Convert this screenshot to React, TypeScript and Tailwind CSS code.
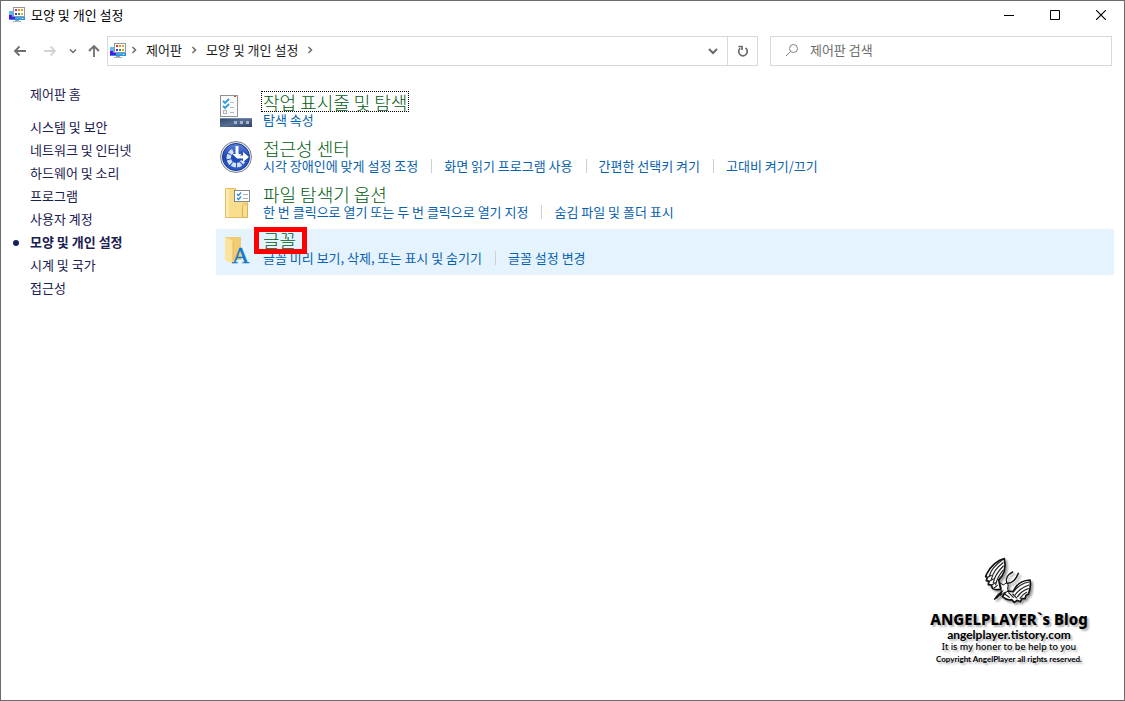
import React from 'react';

interface Category {
  title: string;
  icon: React.ReactNode;
  links: string[];
  focused?: boolean;
  highlighted?: boolean;
}

const PersonalizeIcon = () => (
  <svg width="16" height="16" viewBox="0 0 16 16" className="shrink-0">
    <rect x="0" y="4" width="16" height="9" fill="#2f8fd8" />
    <path d="M0 4h5v5H0z" fill="#5cb8ea" />
    <path d="M0 8h3v2h3v2H0z" fill="#5a10e8" />
    <path d="M6 10h9v2H6z" fill="#35a8f0" />
    <rect x="13" y="11" width="1" height="1" fill="#fff" />
    <path d="M6 13h4v1H6z" fill="#8aa0b0" />
    <path d="M4 14h8v1H4z" fill="#a9b7c2" />
    <rect x="4.5" y="0.5" width="11" height="9" fill="#fff" stroke="#8c99a5" />
    <rect x="6" y="2" width="2" height="2" fill="#e0342c" />
    <rect x="9" y="2" width="2" height="2" fill="#f08a24" />
    <rect x="12" y="2" width="2" height="2" fill="#e8a020" />
    <rect x="6" y="6" width="2" height="2" fill="#5a2bd0" />
    <rect x="9" y="6" width="2" height="2" fill="#2c9a48" />
    <rect x="12" y="6" width="2" height="2" fill="#d8b020" />
  </svg>
);

const TaskbarIcon = () => (
  <svg width="32" height="32" viewBox="0 0 32 32">
    <defs>
      <linearGradient id="bar" x1="0" y1="0" x2="1" y2="1">
        <stop offset="0" stopColor="#2f4468" />
        <stop offset="0.5" stopColor="#566d94" />
        <stop offset="1" stopColor="#2c4064" />
      </linearGradient>
    </defs>
    <rect x="0.5" y="0.5" width="17" height="21" fill="#fbfbfb" stroke="#8d9399" />
    <path d="M14 1h2v1h-2z" fill="#d04030" />
    <path d="M3 6l2 2 4-4M3 11l2 2 4-4" fill="none" stroke="#2d9be0" strokeWidth="1.8" />
    <rect x="3.5" y="15.5" width="3" height="3" fill="none" stroke="#b0b5ba" />
    <path d="M10 7.5h4M10 12.5h4M10 17.5h4" stroke="#b4b8bc" />
    <rect x="0" y="23" width="32" height="9" fill="url(#bar)" />
    <path d="M0 23.5h32" stroke="#7186a8" />
    <path d="M14 26h3v3h-3zM20 26h3v3h-3zM26 26h3v3h-3z" fill="#a5b3c8" />
  </svg>
);

const AccessIcon = () => (
  <svg width="32" height="32" viewBox="0 0 32 32">
    <defs>
      <linearGradient id="disc" x1="0" y1="0" x2="0" y2="1">
        <stop offset="0" stopColor="#5f83d8" />
        <stop offset="0.5" stopColor="#1d48b2" />
        <stop offset="1" stopColor="#2a5fd2" />
      </linearGradient>
    </defs>
    <circle cx="16" cy="16" r="15.5" fill="#e4e7eb" stroke="#7d8590" />
    <circle cx="16" cy="16" r="13.5" fill="url(#disc)" stroke="#17348c" />
    <path
      d="M13 10A7.500 7.500 0 1 0 23 20"
      fill="none"
      stroke="#d5e0f5"
      strokeWidth="4.500"
      strokeDasharray="4.200 1"
    />
    <path d="M15.500 5h3v8h3l-4.500 4.500-4.500-4.500h3z" fill="#fff" />
    <path d="M17 14.500h6v-3.500l6 5-6 5v-3.500h-6z" fill="#fff" />
  </svg>
);

const FolderOptionsIcon = () => (
  <svg width="32" height="32" viewBox="0 0 32 32">
    <path d="M5.500 1.500h10v2h12v27h-22z" fill="#f8dd8c" stroke="#e3bd60" />
    <path d="M6 2h3v28H6z" fill="#fce9ae" />
    <path d="M22.500 30.500V19l2.500-3 2.500 3v11.500z" fill="#f9df92" stroke="#dcb352" />
    <rect x="14.500" y="3.500" width="15" height="11" fill="#fff" stroke="#7f8990" />
    <path d="M17 7l1.500 1.500L21 5.500M17 11l1.500 1.500L21 9.500" fill="none" stroke="#3287d0" strokeWidth="1.300" />
    <path d="M23 7.500h5M23 11.500h5" stroke="#a9b0b6" />
  </svg>
);

const FontsIcon = () => (
  <svg width="32" height="32" viewBox="0 0 32 32" className="overflow-visible">
    <path d="M5 4h16v23H5z" fill="#f1cc70" />
    <path d="M5 4l8 4v23l-8-4z" fill="#fbe39d" />
    <path d="M13 8v23" stroke="#e2b95a" />
    <text
      x="12"
      y="30"
      fontFamily="Liberation Serif, serif"
      fontSize="24"
      fontWeight="400"
      fill="#0f7ac4"
      stroke="#0f7ac4"
      strokeWidth="0.500"
    >
      A
    </text>
  </svg>
);

const WingsLogo = () => (
  <svg width="70" height="55" viewBox="0 0 210 165" className="drop-shadow-[2px_2px_1px_rgba(0,0,0,0.4)]">
    <g fill="#fff" stroke="#111" strokeWidth="5" strokeLinejoin="round" strokeLinecap="round">
      <path d="M91 14C70 18 48 38 38 60l-3 8 5 2-3 10 8 2-2 10 9 1 4 11c8 5 16 3 24 2l-6-28c14-12 24-30 17-64z" />
      <path d="M168 78c-16 1-32 7-42 20l-9 15-20-2-12 17c8 7 18 12 28 9l8 8 8-6 10 4 5-9 9 0 3-10 7-3c5-12 8-26 5-43z" />
    </g>
    <g fill="none" stroke="#222" strokeWidth="3.500" strokeLinecap="round">
      <path d="M84 19C62 34 50 50 46 66M87 26C68 40 56 58 52 76M88 36C76 48 62 64 58 86M88 48C80 58 70 68 65 92" />
      <path d="M42 70l10-6M46 82l12-7M52 94l12-8M60 102l10-8" />
      <path d="M164 84c-20 4-34 14-46 30M165 93c-18 6-32 16-42 30M163 104c-12 4-24 12-32 24M158 115c-8 4-14 8-20 18" />
      <path d="M92 120l14 10M104 116l14 14M116 120l12 12" />
    </g>
    <path
      d="M77 86l11 7 10-7c4 4 6 9 3 14l1 12-13 5-10 8c3-12 5-24-2-39z"
      fill="#fff"
      stroke="#111"
      strokeWidth="3"
      strokeLinejoin="round"
    />
    <path d="M59 136l12-16 18-13-6 12-13 14-9 5z" fill="#111" />
    <path d="M98 86c-5-14 6-26 18-32M101 88c16 0 26-14 32-30" fill="none" stroke="#111" strokeWidth="4.500" strokeLinecap="round" />
  </svg>
);

const Chevron = ({ down = false }: { down?: boolean }) => (
  <svg width="8" height="8" viewBox="0 0 8 8" fill="none" stroke="#6b6b6b" strokeWidth="1.5" className="shrink-0">
    <path d={down ? 'M1 2.500l3 3 3-3' : 'M2.500 1l3 3-3 3'} />
  </svg>
);

const sidebarItems = [
  '시스템 및 보안',
  '네트워크 및 인터넷',
  '하드웨어 및 소리',
  '프로그램',
  '사용자 계정',
  '모양 및 개인 설정',
  '시계 및 국가',
  '접근성',
];

const categories: Category[] = [
  { title: '작업 표시줄 및 탐색', icon: <TaskbarIcon />, links: ['탐색 속성'], focused: true },
  {
    title: '접근성 센터',
    icon: <AccessIcon />,
    links: ['시각 장애인에 맞게 설정 조정', '화면 읽기 프로그램 사용', '간편한 선택키 켜기', '고대비 켜기/끄기'],
  },
  {
    title: '파일 탐색기 옵션',
    icon: <FolderOptionsIcon />,
    links: ['한 번 클릭으로 열기 또는 두 번 클릭으로 열기 지정', '숨김 파일 및 폴더 표시'],
  },
  {
    title: '글꼴',
    icon: <FontsIcon />,
    links: ['글꼴 미리 보기, 삭제, 또는 표시 및 숨기기', '글꼴 설정 변경'],
    highlighted: true,
  },
];

const TitleBar = () => (
  <header className="flex h-7 items-center pl-2">
    <PersonalizeIcon />
    <h1 className="ml-1.5 flex-1 text-black">모양 및 개인 설정</h1>
    <button aria-label="최소화" className="flex h-7 w-[46px] items-center justify-center">
      <svg width="10" height="10" stroke="#000"><path d="M0 5.500h10" /></svg>
    </button>
    <button aria-label="최대화" className="flex h-7 w-[46px] items-center justify-center">
      <svg width="10" height="10" fill="none" stroke="#000"><path d="M.5 .5h9v9h-9z" /></svg>
    </button>
    <button aria-label="닫기" className="flex h-7 w-[46px] items-center justify-center">
      <svg width="10" height="10" stroke="#000" strokeWidth="1.200"><path d="M0 0l10 10M10 0L0 10" /></svg>
    </button>
  </header>
);

const NavBar = () => (
  <nav className="mt-[7px] flex h-[30px] items-center pr-3 pl-3">
    <button aria-label="뒤로">
      <svg width="14" height="12" fill="none" stroke="#6e6e6e" strokeWidth="1.800"><path d="M13 6H2M6.500 1.500L2 6l4.500 4.500" /></svg>
    </button>
    <button aria-label="앞으로" className="ml-4">
      <svg width="14" height="12" fill="none" stroke="#d4d4d4" strokeWidth="1.800"><path d="M1 6h11M7.500 1.500L12 6l-4.500 4.500" /></svg>
    </button>
    <button aria-label="최근 위치" className="ml-3"><Chevron down /></button>
    <button aria-label="위로" className="ml-2.5">
      <svg width="14" height="14" fill="none" stroke="#6e6e6e" strokeWidth="1.800"><path d="M7 13V2M2 7l5-5 5 5" /></svg>
    </button>

    {/* Address bar */}
    <div className="ml-1.5 flex h-full flex-1 items-center border border-[#d9d9d9] pl-0.5 text-[#1a1a1a]">
      <PersonalizeIcon />
      <div className="flex flex-1 items-center gap-2 pb-0.5 pl-1">
        <Chevron />
        <a href="#panel">제어판</a>
        <Chevron />
        <a href="#appearance">모양 및 개인 설정</a>
        <Chevron />
      </div>
      <button aria-label="이전 위치" className="mr-2">
        <svg width="12" height="12" fill="none" stroke="#6b6b6b" strokeWidth="2"><path d="M2 4l4 4 4-4" /></svg>
      </button>
      <button aria-label="새로 고침" className="flex h-full w-[30px] items-center justify-center border-l border-[#d9d9d9]">
        <svg width="12" height="12" fill="none" stroke="#6b6b6b" strokeWidth="1.700">
          <path d="M8.500 3A4.300 4.300 0 1 1 3.200 3.200" />
          <path d="M1.500 1.500h3.500V5" />
        </svg>
      </button>
    </div>

    <label className="ml-3 flex h-full w-[342px] items-center border border-[#d9d9d9] pb-0.5 pl-3.5">
      <svg width="14" height="14" fill="none" stroke="#808080" strokeWidth="1">
        <circle cx="8.500" cy="5.500" r="4" />
        <path d="M5.500 8.500L1 13" />
      </svg>
      <input
        type="text"
        aria-label="제어판 검색"
        placeholder="제어판 검색"
        className="ml-3 w-full outline-none placeholder:text-[#6d6d6d]"
      />
    </label>
  </nav>
);

const Sidebar = () => (
  <aside className="w-[215px] shrink-0 pl-[29px] text-[#1a2050]">
    <a href="#home" className="block leading-[23px]">제어판 홈</a>
    <ul className="mt-2.5 leading-[23px]">
      {sidebarItems.map((item) => {
        const active = item === '모양 및 개인 설정';
        return (
          <li key={item} className="relative">
            {active && <span className="absolute top-2.5 -left-[17px] size-1.5 rounded-full bg-[#1a2060]" />}
            <a href="#category" className={active ? 'font-bold' : ''}>{item}</a>
          </li>
        );
      })}
    </ul>
  </aside>
);

const CategoryRow = ({ title, icon, links, focused, highlighted }: Category) => (
  <section className={`flex h-[46px] pl-1 ${highlighted ? 'bg-[#e5f3ff]' : ''}`}>
    <div className="w-[41px] pt-1">{icon}</div>
    <div>
      <h2 className="relative w-fit text-lg leading-[18px] font-light text-[#005c10]">
        <a href="#open" className={`block border border-dotted px-px pt-px ${focused ? 'border-black' : 'border-transparent'}`}>
          {title}
        </a>
        {/* Red marker around the fonts entry */}
        {highlighted && <span className="absolute -top-0.5 -left-[7px] h-[27px] w-[53px] border-5 border-[#fe0000]" />}
      </h2>
      <ul className="flex pl-0.5 leading-4 text-[#0a62ae]">
        {links.map((link, i) => (
          <li key={link} className="flex items-center">
            {i > 0 && <span className="mr-3 ml-[13px] h-3.5 w-px bg-[#cfcfcf]" />}
            <a href="#task">{link}</a>
          </li>
        ))}
      </ul>
    </div>
  </section>
);

const BlogMark = () => (
  <div className="absolute right-[33px] bottom-[35px] flex w-[164px] flex-col items-center whitespace-nowrap text-black [text-shadow:2px_2px_2px_rgba(0,0,0,0.3)]">
    <WingsLogo />
    <p className="font-['Noto_Sans'] text-[15px] leading-5 font-extrabold">ANGELPLAYER`s Blog</p>
    <p className="font-[Lato] text-xs leading-3 font-bold">angelplayer.tistory.com</p>
    <p className="font-['Noto_Sans'] text-[9px] leading-3 font-medium">It is my honer to be help to you</p>
    <p className="font-[Lato] text-[8px] leading-3 font-bold">Copyright AngelPlayer all rights reserved.</p>
  </div>
);

const App: React.FC = () => {
  return (
    <div className="relative min-h-screen border border-[#6b6b6b] bg-white font-['Noto_Sans_CJK_KR',sans-serif] text-[13px]">
      <TitleBar />
      <NavBar />
      <div className="flex pt-4 pr-2.5">
        <Sidebar />
        <main className="flex-1 pt-[9px]">
          {categories.map((category) => (
            <CategoryRow key={category.title} {...category} />
          ))}
        </main>
      </div>
      <BlogMark />
    </div>
  );
};

export default App;
